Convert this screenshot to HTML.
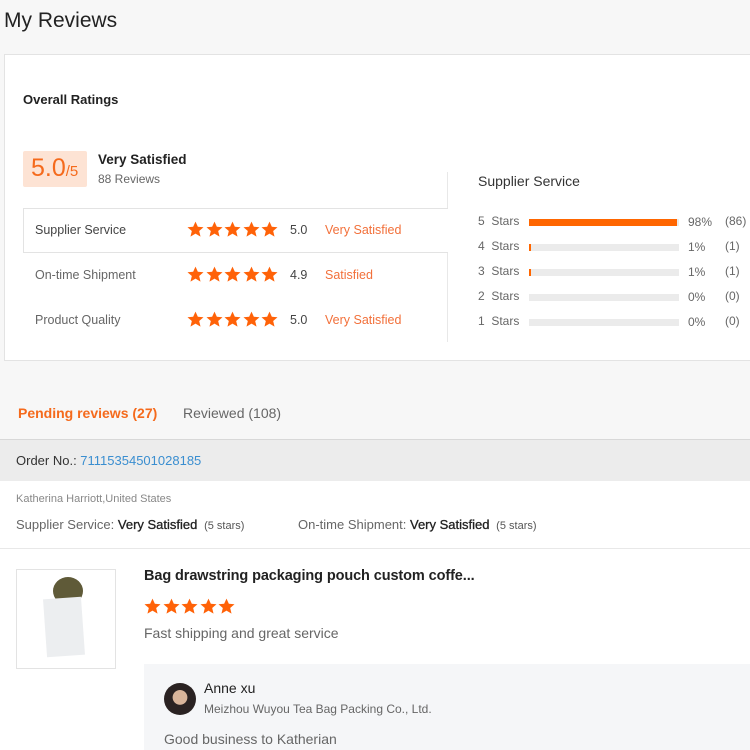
<!DOCTYPE html><html><head><style>
*{margin:0;padding:0;box-sizing:border-box}
body{width:750px;height:750px;overflow:hidden;background:#f7f7f7;font-family:"Liberation Sans",Arial,sans-serif;color:#333;position:relative}
.a{position:absolute;white-space:nowrap}
.st{display:inline-block;width:17px;height:17px;margin-right:1.5px;vertical-align:middle}
.gray{color:#666}.or{color:#f2703a}
.bar{position:absolute;left:529px;width:150px;height:7px;background:#ebebeb}
.bar i{display:block;height:7px;background:#ff6600}
</style></head><body>
<svg width="0" height="0" style="position:absolute"><defs><symbol id="s" viewBox="0 0 24 24"><path fill="#ff6208" d="M12 0.8l3.3 7.3 8 .7-6.1 5.3 1.9 7.9L12 17.8 4.9 22l1.9-7.9L.7 8.8l8-.7z"/></symbol></defs></svg>
<div class="a" style="left:4px;top:9px;font-size:21px;color:#222">My Reviews</div>
<div class="a" style="left:4px;top:54px;width:750px;height:307px;background:#fff;border:1px solid #e3e3e3"></div>
<div class="a" style="left:23px;top:92px;font-size:13px;font-weight:bold;color:#222">Overall Ratings</div>
<div class="a" style="left:23px;top:151px;width:64px;height:36px;background:#fde3d4;border-radius:2px"></div>
<div class="a" style="left:31px;top:154px;font-size:25px;color:#f56a1c">5.0<span style="font-size:15px">/5</span></div>
<div class="a" style="left:98px;top:152px;font-size:13.5px;font-weight:bold;color:#222">Very Satisfied</div>
<div class="a gray" style="left:98px;top:172px;font-size:12px">88 Reviews</div>
<div class="a" style="left:447px;top:172px;width:1px;height:170px;background:#e8e8e8"></div>
<div class="a" style="left:23px;top:208px;width:425px;height:45px;border:1px solid #e3e3e3;border-right:none;background:#fff"></div>
<div class="a" style="left:35px;top:223px;font-size:12.5px;color:#444">Supplier Service</div>
<div class="a" style="left:187px;top:221px"><svg class="st"><use href="#s"/></svg><svg class="st"><use href="#s"/></svg><svg class="st"><use href="#s"/></svg><svg class="st"><use href="#s"/></svg><svg class="st"><use href="#s"/></svg></div>
<div class="a" style="left:290px;top:223px;font-size:12.5px;color:#444">5.0</div>
<div class="a or" style="left:325px;top:223px;font-size:12.5px">Very Satisfied</div>
<div class="a gray" style="left:35px;top:268px;font-size:12.5px">On-time Shipment</div>
<div class="a" style="left:187px;top:266px"><svg class="st"><use href="#s"/></svg><svg class="st"><use href="#s"/></svg><svg class="st"><use href="#s"/></svg><svg class="st"><use href="#s"/></svg><svg class="st"><use href="#s"/></svg></div>
<div class="a" style="left:290px;top:268px;font-size:12.5px;color:#444">4.9</div>
<div class="a or" style="left:325px;top:268px;font-size:12.5px">Satisfied</div>
<div class="a gray" style="left:35px;top:313px;font-size:12.5px">Product Quality</div>
<div class="a" style="left:187px;top:311px"><svg class="st"><use href="#s"/></svg><svg class="st"><use href="#s"/></svg><svg class="st"><use href="#s"/></svg><svg class="st"><use href="#s"/></svg><svg class="st"><use href="#s"/></svg></div>
<div class="a" style="left:290px;top:313px;font-size:12.5px;color:#444">5.0</div>
<div class="a or" style="left:325px;top:313px;font-size:12.5px">Very Satisfied</div>
<div class="a" style="left:478px;top:173px;font-size:14px;color:#333">Supplier Service</div>
<div class="a gray" style="left:478px;top:209px;font-size:12px;line-height:25px">5&nbsp; Stars<br>4&nbsp; Stars<br>3&nbsp; Stars<br>2&nbsp; Stars<br>1&nbsp; Stars</div>
<div class="bar" style="top:219px"><i style="width:148px"></i></div>
<div class="bar" style="top:244px"><i style="width:2px"></i></div>
<div class="bar" style="top:269px"><i style="width:2px"></i></div>
<div class="bar" style="top:294px"></div>
<div class="bar" style="top:319px"></div>
<div class="a gray" style="left:688px;top:210px;font-size:12px;line-height:25px">98%<br>1%<br>1%<br>0%<br>0%</div>
<div class="a gray" style="left:725px;top:209px;font-size:12px;line-height:25px">(86)<br>(1)<br>(1)<br>(0)<br>(0)</div>
<div class="a" style="left:18px;top:405px;font-size:14px;font-weight:bold;color:#f56a1c">Pending reviews (27)</div>
<div class="a gray" style="left:183px;top:405px;font-size:14px">Reviewed (108)</div>
<div class="a" style="left:0;top:439px;width:750px;height:42px;background:#ececec;border-top:1px solid #d8d8d8"></div>
<div class="a" style="left:16px;top:453px;font-size:13px;color:#333">Order No.: <span style="color:#3a8ed0">71115354501028185</span></div>
<div class="a" style="left:0;top:481px;width:750px;height:269px;background:#fff"></div>
<div class="a" style="left:16px;top:493px;font-size:11px;color:#888">Katherina Harriott,United States</div>
<div class="a gray" style="left:16px;top:517px;font-size:13px">Supplier Service: <span style="color:#222;-webkit-text-stroke:.3px #222">Very Satisfied</span> <span style="font-size:11px;color:#555">&nbsp;(5 stars)</span></div>
<div class="a gray" style="left:298px;top:517px;font-size:13px">On-time Shipment: <span style="color:#222;-webkit-text-stroke:.3px #222">Very Satisfied</span> <span style="font-size:11px;color:#555">&nbsp;(5 stars)</span></div>
<div class="a" style="left:0;top:548px;width:750px;height:1px;background:#e8e8e8"></div>
<div class="a" style="left:16px;top:569px;width:100px;height:100px;border:1px solid #e3e3e3;background:#fff">
<div class="a" style="left:36px;top:7px;width:30px;height:28px;border-radius:50%;background:#5f5a38"></div>
<div class="a" style="left:28px;top:28px;width:38px;height:58px;background:#eceef0;transform:rotate(-4deg)"></div></div>
<div class="a" style="left:144px;top:568px;font-size:14.5px;font-weight:bold;color:#222;letter-spacing:-0.1px">Bag drawstring packaging pouch custom coffe...</div>
<div class="a" style="left:144px;top:598px"><svg class="st"><use href="#s"/></svg><svg class="st"><use href="#s"/></svg><svg class="st"><use href="#s"/></svg><svg class="st"><use href="#s"/></svg><svg class="st"><use href="#s"/></svg></div>
<div class="a gray" style="left:144px;top:625px;font-size:14px">Fast shipping and great service</div>
<div class="a" style="left:144px;top:664px;width:606px;height:86px;background:#f5f6f8"></div>
<div class="a" style="left:164px;top:683px;width:32px;height:32px;border-radius:50%;background:radial-gradient(circle at 50% 45%,#d8b49a 0 30%,#2a2222 32%)"></div>
<div class="a" style="left:204px;top:680px;font-size:14px;color:#222">Anne xu</div>
<div class="a gray" style="left:204px;top:702px;font-size:12px">Meizhou Wuyou Tea Bag Packing Co., Ltd.</div>
<div class="a gray" style="left:164px;top:731px;font-size:14px">Good business to Katherian</div>
</body></html>
